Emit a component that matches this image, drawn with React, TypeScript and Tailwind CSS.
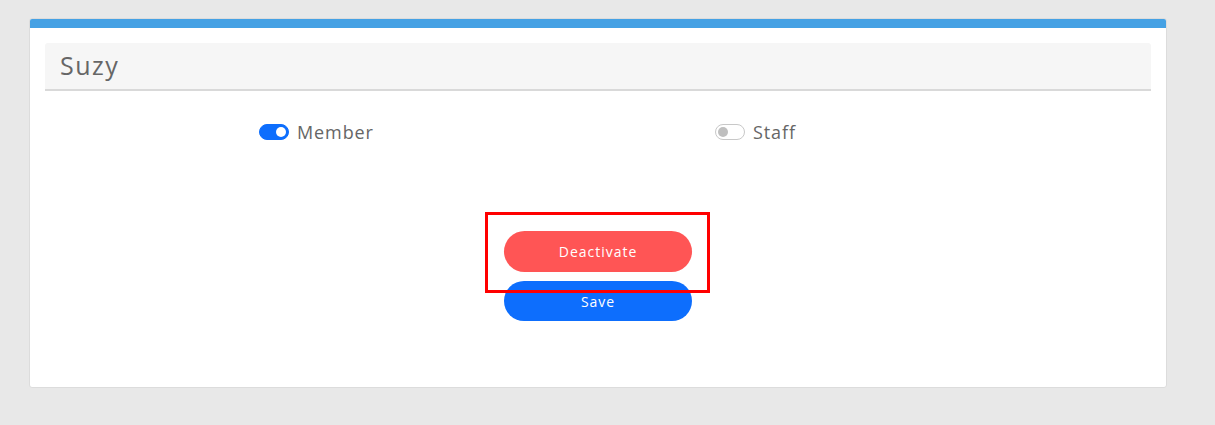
import React, { useState } from 'react';

function Toggle({ on, onChange }: { on: boolean; onChange: () => void }) {
  return (
    <button
      onClick={onChange}
      className={`relative h-[16px] w-[30px] rounded-full border ${on ? 'bg-[#0d6efd] border-[#0d6efd]' : 'bg-white border-[#c8c8c8]'}`}
    >
      <span
        className={`absolute top-[2px] h-[10px] w-[10px] rounded-full ${on ? 'right-[2px] bg-white' : 'left-[2px] bg-[#bfbfbf]'}`}
      ></span>
    </button>
  );
}

export default function App() {
  const [member, setMember] = useState(true);
  const [staff, setStaff] = useState(false);

  return (
    <div className="h-[425px] w-full bg-[#e8e8e8] pt-[18px] pl-[29px]" style={{ fontFamily: "'Open Sans', 'Noto Sans', sans-serif" }}>
      {/* Card */}
      <div className="w-[1138px] h-[370px] bg-white border border-[#dcdcdc] rounded-[3px] overflow-hidden">
        <div className="h-[9px] bg-[#45a1e4]"></div>
        <div className="px-[15px] pt-[15px]">
          <div className="h-[48px] bg-[#f6f6f6] border-b-2 border-[#d9d9d9] rounded-t-[3px] flex items-center px-[15px]">
            <h2 className="text-[25px] text-[#666666] font-normal tracking-[0.06em]">Suzy</h2>
          </div>

          {/* Roles */}
          <div className="flex items-center h-[40px] mt-[21px] pl-[214px] text-[18px] text-[#666666] tracking-[0.05em]">
            <label className="flex items-center gap-[8px] w-[456px]">
              <Toggle on={member} onChange={() => setMember(!member)} />
              <span>Member</span>
            </label>
            <label className="flex items-center gap-[8px]">
              <Toggle on={staff} onChange={() => setStaff(!staff)} />
              <span>Staff</span>
            </label>
          </div>

          {/* Actions */}
          <div className="relative flex flex-col items-center gap-[9px] mt-[79px]">
            <button className="w-[188px] h-[41px] rounded-full bg-[#ff5555] text-white text-[14px] tracking-[0.07em]">
              Deactivate
            </button>
            <button className="w-[188px] h-[40px] rounded-full bg-[#0d6efd] text-white text-[14px] tracking-[0.07em]">
              Save
            </button>
            <div className="absolute left-[440px] top-[-19px] w-[225px] h-[81px] border-[3px] border-[#ff0000] pointer-events-none"></div>
          </div>
        </div>
      </div>
    </div>
  );
}
